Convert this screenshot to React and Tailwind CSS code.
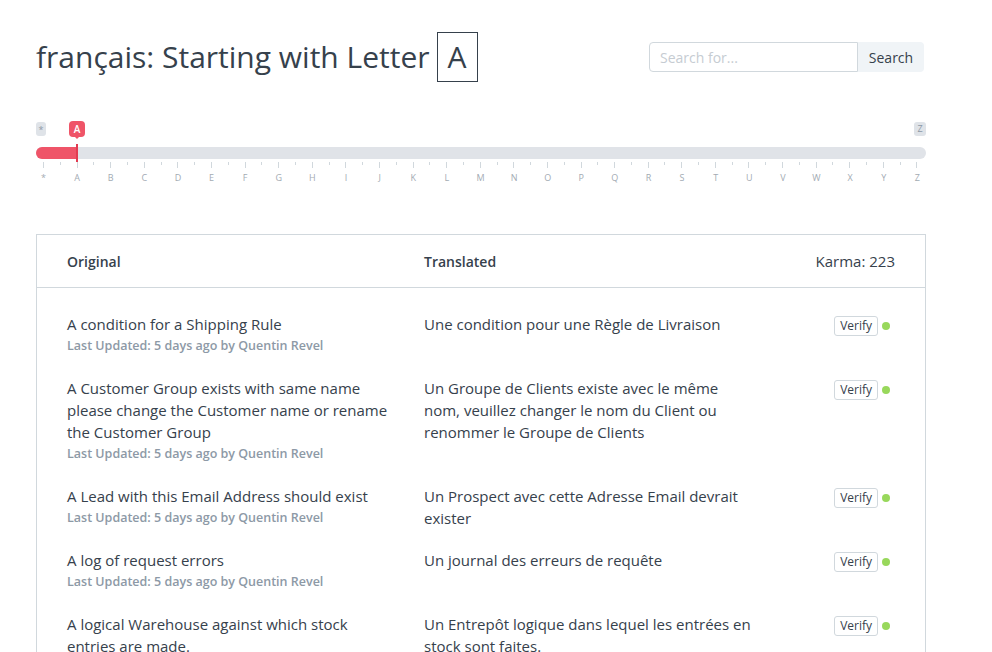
import React from 'react';

const letters = ['*', ...'ABCDEFGHIJKLMNOPQRSTUVWXYZ'.split('')];

const rows = [
  {
    original: 'A condition for a Shipping Rule',
    translated: 'Une condition pour une Règle de Livraison',
  },
  {
    original: 'A Customer Group exists with same name please change the Customer name or rename the Customer Group',
    translated: 'Un Groupe de Clients existe avec le même nom, veuillez changer le nom du Client ou renommer le Groupe de Clients',
  },
  {
    original: 'A Lead with this Email Address should exist',
    translated: 'Un Prospect avec cette Adresse Email devrait exister',
  },
  {
    original: 'A log of request errors',
    translated: 'Un journal des erreurs de requête',
  },
  {
    original: 'A logical Warehouse against which stock entries are made.',
    translated: 'Un Entrepôt logique dans lequel les entrées en stock sont faites.',
  },
];

function LetterSlider() {
  const ticks = [];
  for (let i = 0; i < 53; i++) {
    ticks.push(
      <div key={i} className={`w-px ${i % 2 === 0 ? 'h-[6px]' : 'h-[3px]'} bg-[#d1d8dd]`} />
    );
  }
  return (
    <div className="mt-[39px]">
      {/* value badges */}
      <div className="relative h-[16px]">
        <span className="absolute left-0 top-[1px] h-[14px] w-[10px] rounded-[3px] bg-[#dfe3e8] text-[9px] leading-[16px] text-center text-[#8d99a6]">*</span>
        <span className="absolute left-[33px] top-0 h-[16px] w-[16px] rounded-[4px] bg-[#ef5468] text-[10px] leading-[16px] text-center text-white font-semibold">
          A
          <span className="absolute left-[5px] top-[15px] w-0 h-0 border-l-[3px] border-r-[3px] border-t-[3px] border-l-transparent border-r-transparent border-t-[#ef5468]" />
        </span>
        <span className="absolute right-0 top-[1px] h-[14px] w-[12px] rounded-[3px] bg-[#dfe3e8] text-[9px] leading-[14px] text-center text-[#8d99a6]">Z</span>
      </div>
      {/* track */}
      <div className="relative mt-[10px] h-[12px] rounded-full bg-[#e0e3e8]">
        <div className="h-full w-[41px] rounded-l-full bg-[#ef5468]" />
        <div className="absolute left-[40px] top-[-3px] h-[18px] w-[2px] bg-[#e23b51]" />
      </div>
      {/* ticks */}
      <div className="mt-[3px] ml-[7px] w-[875px] flex justify-between">{ticks}</div>
      <div className="mt-[3px] ml-[7px] w-[875px] flex justify-between">
        {letters.map((l) => (
          <div key={l} className="w-px flex justify-center">
            <span className="text-[9px] leading-[14px] text-[#a3abb3]">{l}</span>
          </div>
        ))}
      </div>
    </div>
  );
}

export default function App() {
  return (
    <div className="min-h-screen bg-white text-[#36414c]" style={{ fontFamily: '"Open Sans", "Noto Sans", sans-serif' }}>
      <div className="ml-[36px] w-[890px] pt-[32px]">
        {/* header */}
        <div className="flex items-center justify-between">
          <h1 className="flex items-center text-[30px] leading-[50px] font-normal">
            français: Starting with Letter
            <span className="ml-[7px] inline-flex h-[50px] w-[41px] items-center justify-center border border-[#36414c]">A</span>
          </h1>
          <div className="flex h-[30px] mr-[2px]">
            <input
              placeholder="Search for..."
              className="w-[209px] rounded-l-[4px] border border-[#d1d8dd] px-[10px] text-[14px] placeholder:text-[#c6ccd2] outline-none"
            />
            <button className="w-[66px] rounded-r-[4px] bg-[#f0f4f7] text-[14px] text-[#36414c]">Search</button>
          </div>
        </div>

        <LetterSlider />

        {/* translations table */}
        <div className="mt-[49px] border border-[#d1d8dd] text-[15px]">
          <div className="flex h-[53px] items-center border-b border-[#d1d8dd] px-[30px]">
            <div className="w-[357px] text-[14px] font-semibold">Original</div>
            <div className="w-[357px] text-[14px] font-semibold">Translated</div>
            <div className="flex-1 text-right">Karma: 223</div>
          </div>
          <div className="pt-[15px] pb-[10px] px-[30px]">
            {rows.map((r, i) => (
              <div key={i} className="flex py-[10px] leading-[22px]">
                <div className="w-[357px] pr-[30px]">
                  <div>{r.original}</div>
                  <div className="text-[12.5px] font-semibold text-[#8d99a6]">Last Updated: 5 days ago by Quentin Revel</div>
                </div>
                <div className="w-[357px] pr-[30px]">{r.translated}</div>
                <div className="flex-1 flex justify-end items-start pt-[3px]">
                  <button className="h-[20px] rounded-[3px] border border-[#d1d8dd] px-[5px] text-[12px] leading-[18px] text-[#36414c]">Verify</button>
                  <span className="ml-[4px] mr-[5px] mt-[6px] h-[8px] w-[8px] rounded-full bg-[#98d85b]" />
                </div>
              </div>
            ))}
          </div>
        </div>
      </div>
    </div>
  );
}
